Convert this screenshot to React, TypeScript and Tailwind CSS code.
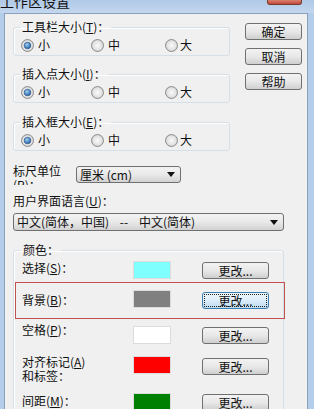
import type { ReactNode } from "react";
import clsx from "clsx";

const Radio = ({ checked }: { checked?: boolean }) => {
  return (
    <svg width="13" height="13" viewBox="0 0 13 13" className="shrink-0">
      <defs>
        <radialGradient id="radio-bg" cx="50%" cy="50%" r="50%">
          <stop offset="0%" stopColor="#f9f9f9" />
          <stop offset="70%" stopColor="#e4e4e4" />
          <stop offset="100%" stopColor="#c9c9c9" />
        </radialGradient>
        <radialGradient id="radio-dot" cx="40%" cy="35%" r="70%">
          <stop offset="0%" stopColor="#9fd0f5" />
          <stop offset="100%" stopColor="#1a5a9c" />
        </radialGradient>
      </defs>
      <circle cx="6.5" cy="6.5" r="6" fill="url(#radio-bg)" stroke="#8e8f8f" />
      {checked && (
        <circle
          cx="6.5"
          cy="6.5"
          r="3.3"
          fill="url(#radio-dot)"
          stroke="#1c4e82"
          strokeWidth="0.6"
        />
      )}
    </svg>
  );
};

const Btn = ({
  children,
  focus,
  className,
}: {
  children: ReactNode;
  focus?: boolean;
  className?: string;
}) => {
  return (
    <div
      className={clsx(
        "flex h-[17px] items-center justify-center rounded-[3px] border text-[12px] leading-none",
        focus
          ? "border-[#3c7fb1] bg-linear-to-b from-[#eef7fc] via-[#dcedf8] to-[#bcdcf2] p-[2px]"
          : "border-[#707070] bg-linear-to-b from-[#f3f3f3] via-[#e8e8e8] to-[#cfcfcf]",
        className
      )}
    >
      {focus ? (
        <span className="flex h-full w-full items-center justify-center outline-1 outline-dotted outline-[#222]">
          {children}
        </span>
      ) : (
        children
      )}
    </div>
  );
};

const Select = ({ text, className }: { text: string; className?: string }) => {
  return (
    <div
      className={clsx(
        "flex items-center justify-between rounded-[3px] border border-[#707070] bg-linear-to-b from-[#f3f3f3] via-[#e9e9e9] to-[#d2d2d2] pl-[3px] pr-[5px] text-[12px] leading-none",
        className
      )}
    >
      <span className="whitespace-pre">{text}</span>
      <svg width="8" height="5" viewBox="0 0 8 5">
        <path d="M0 0h8L4 5z" fill="#111" />
      </svg>
    </div>
  );
};

const Group = ({
  title,
  children,
  className,
}: {
  title: ReactNode;
  children: ReactNode;
  className?: string;
}) => {
  return (
    <fieldset
      className={clsx(
        "rounded-[3px] border border-[#d5dfe5] shadow-[inset_1px_1px_0_#fff]",
        className
      )}
    >
      <legend className="ml-[6px] px-[2px] text-[12px] leading-[14px]">{title}</legend>
      {children}
    </fieldset>
  );
};

const U = ({ children }: { children: ReactNode }) => (
  <span className="underline underline-offset-1">{children}</span>
);

const SizeGroup = ({ title, className }: { title: ReactNode; className?: string }) => (
  <Group title={title} className={className}>
    <div className="mt-[4px] mb-[3px] flex h-[14px] items-center pl-[7px] text-[12px]">
      <div className="flex w-[70px] items-center gap-[4px]">
        <Radio checked />
        <span>小</span>
      </div>
      <div className="flex w-[74px] items-center gap-[4px]">
        <Radio />
        <span>中</span>
      </div>
      <div className="flex items-center gap-[2px]">
        <Radio />
        <span>大</span>
      </div>
    </div>
  </Group>
);

const ColorRow = ({
  label,
  color,
  labelTop,
  btnTop,
  rowClass,
  focus,
}: {
  label: ReactNode;
  color: string;
  labelTop: string;
  btnTop: string;
  rowClass: string;
  focus?: boolean;
}) => (
  <div className={clsx("flex items-start border pl-[6px]", rowClass)}>
    <div className={clsx("h-[18px] w-[111px] text-[12px] leading-[14px]", labelTop)}>
      {label}
    </div>
    <div className={clsx("h-[18px] w-[38px] border border-[#dcdcdc]", color)} />
    <Btn focus={focus} className={clsx("ml-[31px] w-[67px]", btnTop)}>
      更改...
    </Btn>
  </div>
);

export default function App() {
  return (
    <div className="flex h-[409px] w-[314px] flex-col overflow-hidden bg-[#b4cde9] font-['Noto_Sans_CJK_SC','Noto_Sans',sans-serif] text-[#111]">
      {/* title bar */}
      <div className="flex h-[13px] shrink-0 justify-between overflow-hidden bg-linear-to-b from-[#b0c9e6] to-[#c3d7ee]">
        <span className="-mt-[6px] text-[14px] leading-[14px]">工作区设置</span>
        <div className="mr-[12px] h-[5px] w-[35px] rounded-b-[3px] border border-t-0 border-[#7b3a30] bg-linear-to-b from-[#d8806e] to-[#c0493a]" />
      </div>

      <div className="flex min-h-0 flex-1">
        <div className="w-[4px] bg-[#b4cde9]" />
        <div className="w-[304px] border-x border-t border-[#8a9fb9] bg-[#f0f0f0] pt-[6px] pl-[8px]">
          {/* top section */}
          <div className="flex items-start">
            <div className="flex w-[217px] flex-col">
              <SizeGroup
                title={
                  <>
                    工具栏大小(<U>T</U>)：
                  </>
                }
              />
              <SizeGroup
                className="mt-[11px]"
                title={
                  <>
                    插入点大小(<U>I</U>)：
                  </>
                }
              />
              <SizeGroup
                className="mt-[12px]"
                title={
                  <>
                    插入框大小(<U>E</U>)：
                  </>
                }
              />
            </div>
            <div className="mt-[3px] ml-[15px] flex w-[57px] flex-col gap-[8px]">
              <Btn className="h-[16px]">确定</Btn>
              <Btn className="h-[16px]">取消</Btn>
              <Btn className="h-[16px]">帮助</Btn>
            </div>
          </div>

          {/* ruler unit */}
          <div className="mt-[13px] flex items-start">
            <div className="h-[21px] w-[63px] overflow-hidden text-[12px] leading-[14px]">
              标尺单位
              <br />(<U>R</U>)：
            </div>
            <Select text="厘米 (cm)" className="mt-[2px] h-[17px] w-[105px]" />
          </div>

          {/* language */}
          <div className="mt-[9px] text-[12px] leading-[14px]">
            用户界面语言(<U>U</U>)：
          </div>
          <Select
            text="中文(简体，中国)    --    中文(简体)"
            className="mt-[5px] h-[18px] w-[271px]"
          />

          {/* colours */}
          <Group title="颜色：" className="mt-[12px] w-[271px] pl-[1px]">
            <ColorRow
              rowClass="border-transparent pt-[3px] pb-[2px]"
              label={
                <>
                  选择(<U>S</U>)：
                </>
              }
              color="bg-[#80ffff]"
              labelTop=""
              btnTop="mt-[1px]"
            />
            <ColorRow
              rowClass="-mr-[2px] border-[#c0504d] py-[7px]"
              label={
                <>
                  背景(<U>B</U>)：
                </>
              }
              color="bg-[#808080]"
              labelTop="mt-[3px]"
              btnTop="mt-[2px]"
              focus
            />
            <ColorRow
              rowClass="border-transparent pt-[6px] pb-[5px]"
              label={
                <>
                  空格(<U>P</U>)：
                </>
              }
              color="bg-white"
              labelTop="-mt-[3px]"
              btnTop="mt-[1px]"
            />
            <ColorRow
              rowClass="border-transparent pt-[5px] pb-[8px]"
              label={
                <>
                  对齐标记(<U>A</U>)
                  <br />
                  和标签：
                </>
              }
              color="bg-[#ff0000]"
              labelTop="-mt-[1px]"
              btnTop="mt-[2px]"
            />
            <ColorRow
              rowClass="border-transparent pt-[8px] pb-[6px]"
              label={
                <>
                  间距(<U>M</U>)：
                </>
              }
              color="bg-[#008000]"
              labelTop="mt-[1px]"
              btnTop="mt-[1px]"
            />
          </Group>
        </div>
        <div className="w-[6px] bg-[#b4cde9]" />
      </div>
    </div>
  );
}
